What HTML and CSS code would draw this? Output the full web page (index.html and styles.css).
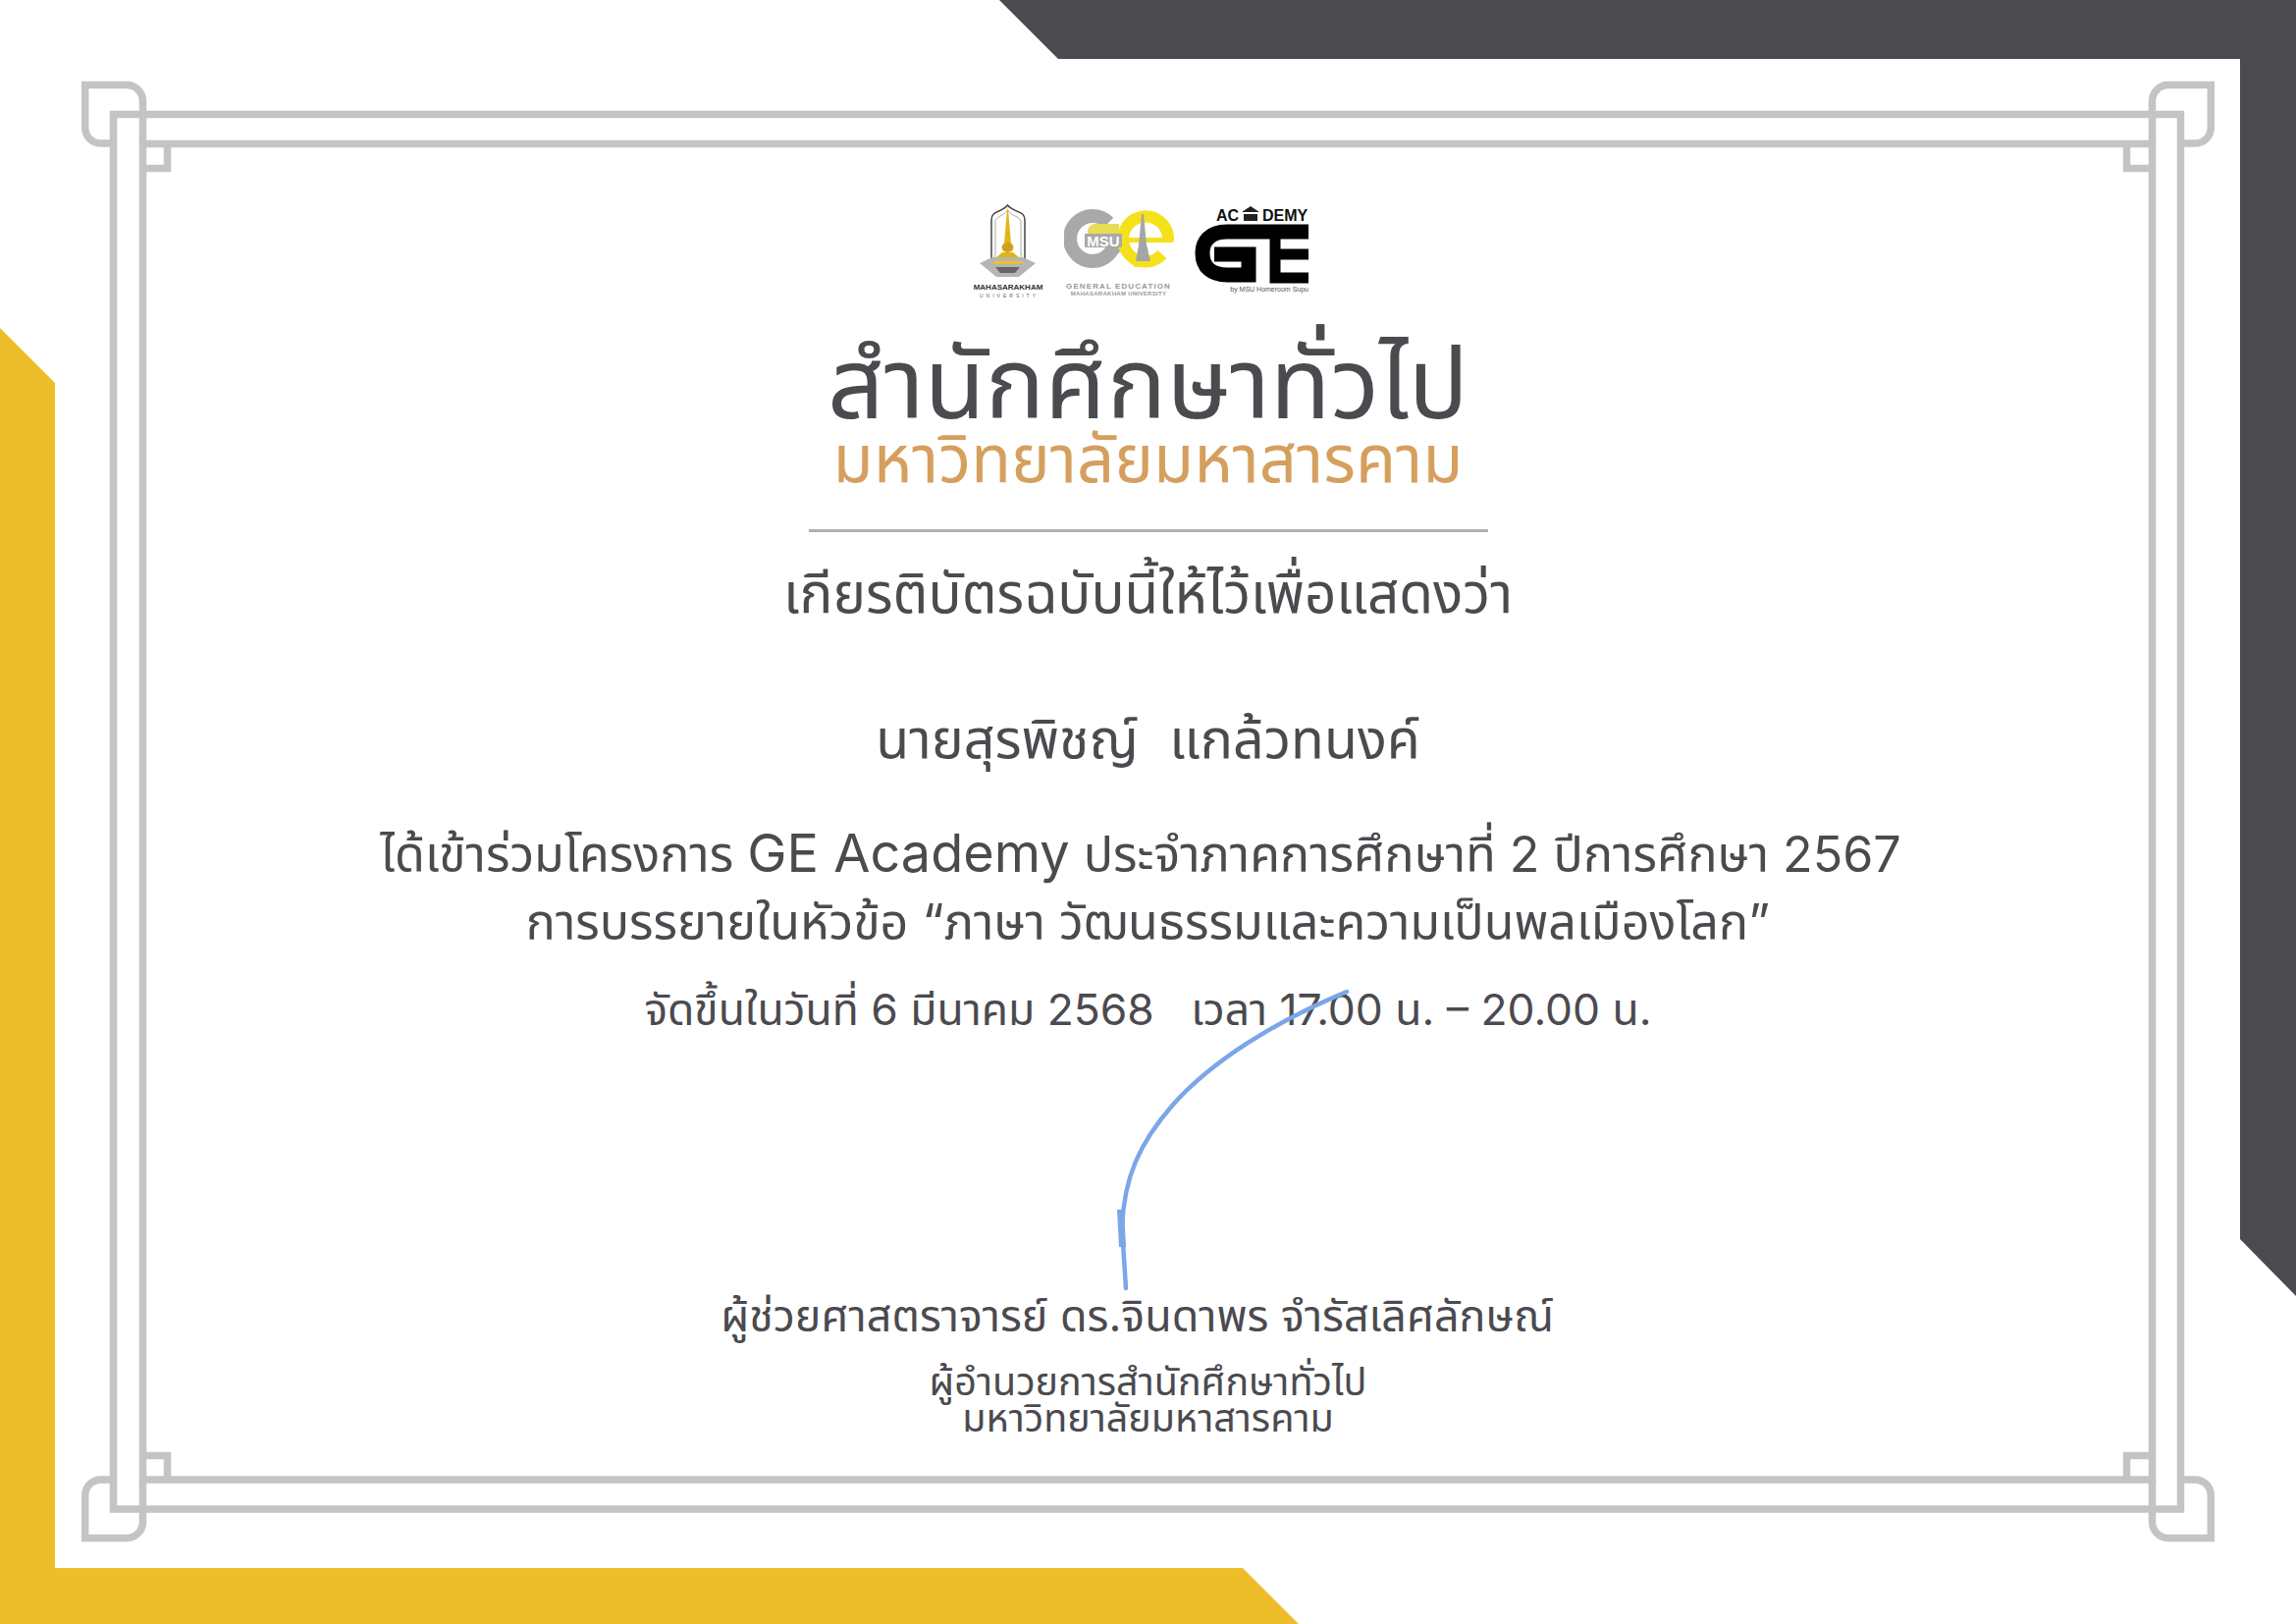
FILE: index.html
```html
<!DOCTYPE html>
<html lang="th">
<head>
    <meta charset="UTF-8">
    <meta name="viewport" content="width=device-width, initial-scale=1.0">
    <title>เกียรติบัตร</title>
    <link rel="stylesheet" href="styles.css">
</head>
<body>
    <div class="certificate">
        <!-- corner shapes and grey frame -->
        <svg class="backdrop" viewBox="0 0 2339 1654" width="2339" height="1654">
            <polygon fill="#4b4a4f" points="1018,0 1078,60 2282,60 2282,1262 2339,1320 2339,0"/>
            <polygon fill="#edbd2a" points="0,334 56,390 56,1597 1266,1597 1323,1654 0,1654"/>
            <g fill="none" stroke="#c4c4c4" stroke-width="7.500">
                <rect x="115.500" y="116.500" width="2106" height="1420.500"/>
                <rect x="145.500" y="146.500" width="2047" height="1360.500"/>
                <path d="M145.500 146V103a16.500 16.500 0 0 0-16.500-16.500H86.700V130a16 16 0 0 0 16 16H115"/>
                <path d="M2192.500 146V103a16.500 16.500 0 0 1 16.500-16.500H2252.300V130a16 16 0 0 1-16 16H2222"/>
                <path d="M145.500 1507V1550a16.500 16.500 0 0 1-16.500 16.500H86.700V1523a16 16 0 0 1 16-16H115"/>
                <path d="M2192.500 1507V1550a16.500 16.500 0 0 0 16.500 16.500H2252.300V1523a16 16 0 0 0-16-16H2222"/>
                <path d="M146 171.500H170.500V150"/>
                <path d="M2192 171.500H2166.500V150"/>
                <path d="M146 1482.500H170.500V1504"/>
                <path d="M2192 1482.500H2166.500V1504"/>
            </g>
        </svg>

        <main class="content">
            <div class="logos">
                <svg class="logo" viewBox="990 205 74 100" width="74" height="100">
                    <path d="M1010 265V224C1010 214 1020 217 1026.500 209C1033 217 1044 214 1044 224V265" fill="none" stroke="#444" stroke-width="1.500"/>
                    <path d="M1014 265V226C1014 220 1022 221 1026.500 214C1031 221 1040 220 1040 226V265" fill="none" stroke="#aaa" stroke-width="1"/>
                    <path d="M1026 213H1027L1030 248H1023Z" fill="#e3b51b"/>
                    <ellipse cx="1026.500" cy="252" rx="6" ry="5" fill="#d1a01a"/>
                    <path d="M1021 257H1032L1038 262L1044 266H1009L1015 262Z" fill="#e2b41c"/>
                    <path d="M998 268L1011 262L1042 262L1055 268L1038 282H1015Z" fill="#b5b5b5"/>
                    <path d="M1009 266H1044L1038 269H1015Z" fill="#edc21f"/>
                    <path d="M1014 272H1039L1034 278H1019Z" fill="#666"/>
                    <text class="logo-msu" x="1027" y="295" text-anchor="middle">MAHASARAKHAM</text>
                    <text class="logo-uni" x="1028" y="303" text-anchor="middle">UNIVERSITY</text>
                </svg>
                <svg class="logo" viewBox="1084 205 112 100" width="112" height="100">
                    <path d="M1129.300 226.700A23 23 0 1 0 1129.300 259.300L1137 250" fill="none" stroke="#a9a9a9" stroke-width="14"/>
                    <path d="M1190 245A23 23 0 1 0 1184 259" fill="none" stroke="#f5e11b" stroke-width="12"/>
                    <path d="M1145 244.500H1195" fill="none" stroke="#f5e11b" stroke-width="5"/>
                    <path d="M1163 218H1165L1168 250L1172 266H1157L1160 250Z" fill="#a5a5a5"/>
                    <ellipse cx="1164.500" cy="255" rx="5" ry="6" fill="#a5a5a5"/>
                    <path d="M1150 266H1180L1174 272H1156Z" fill="#f5e11b"/>
                    <path d="M1108 238V236C1108 231 1112 228 1116 228H1140V238Z" fill="#e8dc55"/>
                    <rect x="1105" y="238" width="38" height="14" fill="#a9a9a9"/>
                    <text class="logo-ge-msu" x="1124" y="251" text-anchor="middle">MSU</text>
                    <text class="logo-ge" x="1139.500" y="294" text-anchor="middle">GENERAL EDUCATION</text>
                    <text class="logo-ge-small" x="1139.500" y="301" text-anchor="middle">MAHASARAKHAM UNIVERSITY</text>
                </svg>
                <svg class="logo" viewBox="1216 205 120 100" width="120" height="100">
                    <text class="logo-ac" x="1239" y="225">AC</text>
                    <path d="M1265 216L1274 210L1283 216ZM1267 218H1281V225H1267Z" fill="#222"/>
                    <text class="logo-ac" x="1286" y="225">DEMY</text>
                    <path d="M1333 236H1250C1232 236 1225 246 1225 258C1225 272 1234 280 1250 280H1272V259H1237" fill="none" stroke="#000" stroke-width="15"/>
                    <path d="M1299 236V283H1333M1299 259H1333" fill="none" stroke="#000" stroke-width="11"/>
                    <text class="logo-by" x="1333" y="297" text-anchor="end">by MSU Homeroom Ѕuрu</text>
                </svg>
            </div>

            <h1 class="title">สำนักศึกษาทั่วไป</h1>
            <h2 class="subtitle">มหาวิทยาลัยมหาสารคาม</h2>
            <hr class="rule">
            <p class="lead">เกียรติบัตรฉบับนี้ให้ไว้เพื่อแสดงว่า</p>
            <p class="name">นายสุรพิชญ์&nbsp; แกล้วทนงค์</p>
            <p class="detail detail-first">ได้เข้าร่วมโครงการ <span class="latin">GE Academy</span> ประจำภาคการศึกษาที่ 2 ปีการศึกษา 2567</p>
            <p class="detail">การบรรยายในหัวข้อ “ภาษา วัฒนธรรมและความเป็นพลเมืองโลก”</p>
            <p class="date">จัดขึ้นในวันที่ 6 มีนาคม 2568 &nbsp; เวลา 17.00 น. – 20.00 น.</p>
            <p class="signer">ผู้ช่วยศาสตราจารย์ ดร.จินดาพร จำรัสเลิศลักษณ์</p>
            <p class="role role-first">ผู้อำนวยการสำนักศึกษาทั่วไป</p>
            <p class="role">มหาวิทยาลัยมหาสารคาม</p>
        </main>

        <!-- pen signature lies over the date line -->
        <svg class="signature" viewBox="0 0 2339 1654" width="2339" height="1654">
            <path d="M1372 1010C1300 1040 1235 1080 1195 1125C1160 1165 1145 1200 1143 1250L1147 1312" fill="none" stroke="#7ba6e8" stroke-width="4.500" stroke-linecap="round"/>
            <path d="M1138 1232L1145 1232L1147 1270L1140 1270Z" fill="#7ba6e8"/>
        </svg>
    </div>
</body>
</html>
```

FILE: styles.css
```css
* {
    box-sizing: border-box;
}
body {
    margin: 0;
    background: #fff;
}
.certificate {
    position: relative;
    width: 2339px;
    height: 1654px;
    overflow: hidden;
    background: #fff;
    font-family: Inter, "Noto Sans Thai", "Noto Sans", sans-serif;
    color: #4b4a4f;
}
.backdrop, .signature {
    position: absolute;
    left: 0;
    top: 0;
}
.content {
    position: relative;
    display: flex;
    flex-direction: column;
    align-items: center;
    padding-top: 205px;
}
.logos {
    display: flex;
    gap: 20px;
    height: 100px;
    margin-right: 13px;
}
.logo-msu { font: bold 8px "Liberation Sans", sans-serif; fill: #333; }
.logo-uni { font: 5px "Liberation Sans", sans-serif; fill: #666; letter-spacing: 3px; }
.logo-ge-msu { font: bold 15px "Liberation Sans", sans-serif; fill: #fff; }
.logo-ge { font: bold 8px "Liberation Sans", sans-serif; fill: #999; letter-spacing: 1.100px; }
.logo-ge-small { font: bold 6px "Liberation Sans", sans-serif; fill: #999; letter-spacing: .3px; }
.logo-ac { font: bold 16px "Liberation Sans", sans-serif; fill: #111; }
.logo-by { font: 7px "Liberation Sans", sans-serif; fill: #555; }
.title, .subtitle, .lead, .name, .detail, .date, .signer, .role {
    margin: 0;
    font-weight: 400;
    white-space: nowrap;
}
.title {
    font-size: 101px;
    line-height: 82px;
    margin-top: 43px;
}
.subtitle {
    font-size: 67px;
    line-height: 70px;
    margin-top: 2px;
    color: #d59f5e;
}
.rule {
    width: 692px;
    height: 3px;
    margin: 37px 0 0;
    border: 0;
    background: #b0b0b0;
}
.lead {
    font-size: 56.500px;
    line-height: 70px;
    margin-top: 27px;
}
.name {
    font-size: 55.500px;
    line-height: 80px;
    margin-top: 73px;
}
.detail {
    font-size: 50.200px;
    line-height: 69px;
}
.detail-first {
    margin-top: 42px;
    padding-right: 15px;
}
.latin {
    font-size: 54px;
}
.date {
    font-size: 44.400px;
    line-height: 60px;
    margin-top: 25px;
}
.signer {
    font-size: 44.800px;
    line-height: 60px;
    margin-top: 252px;
    padding-right: 22px;
}
.role {
    font-size: 39.500px;
    line-height: 37px;
}
.role-first {
    margin-top: 19px;
}
```
